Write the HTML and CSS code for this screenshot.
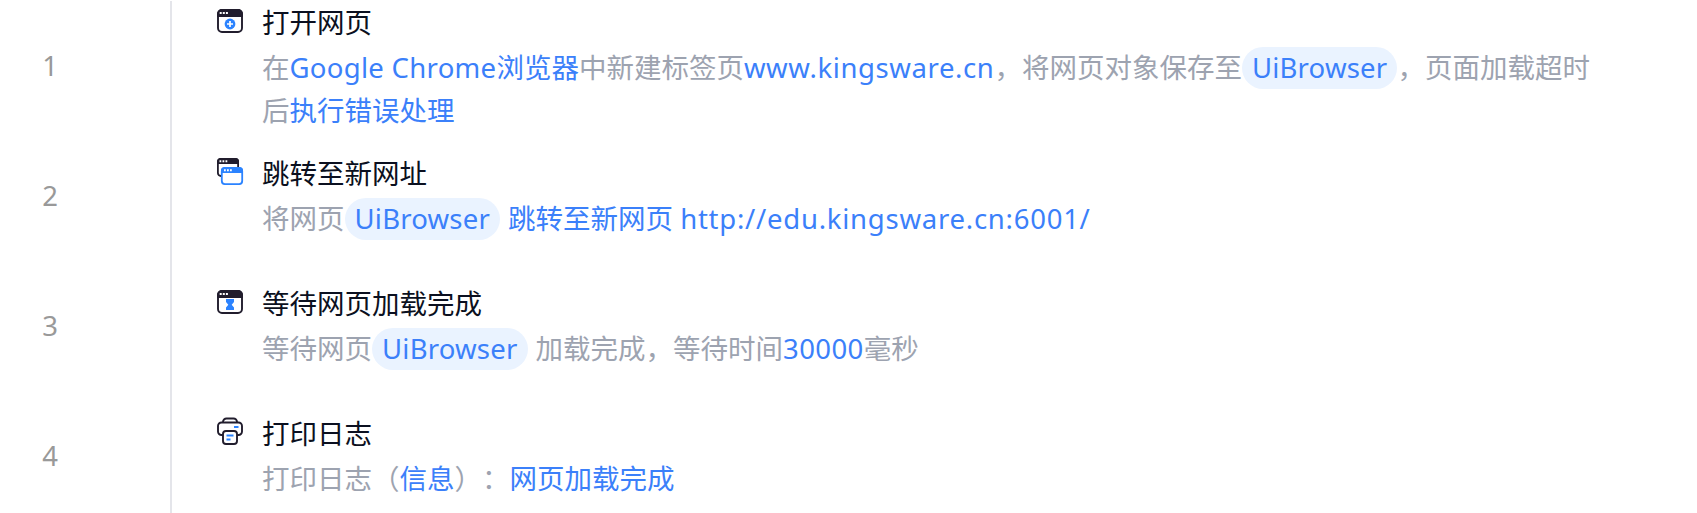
FILE: index.html
```html
<!DOCTYPE html>
<html lang="zh-CN">
<head>
<meta charset="utf-8">
<title>流程步骤</title>
<link rel="stylesheet" href="styles.css">
</head>
<body>
<main class="flow">
  <ol class="numbers">
    <li class="number">1</li>
    <li class="number">2</li>
    <li class="number">3</li>
    <li class="number">4</li>
  </ol>
  <div class="steps">
    <section class="step">
      <svg class="icon" viewBox="0 0 28 28" fill="none">
        <rect x="2" y="3" width="24" height="22" rx="4" stroke="#211d2d" stroke-width="1.9"/>
        <path d="M1 10V7a5 5 0 0 1 5-5h16a5 5 0 0 1 5 5v3z" fill="#211d2d"/>
        <path d="M3.7 5h2v2h-2zM6.8 5h2v2h-2zM9.9 5h2v2h-2z" fill="#fff"/>
        <circle cx="14" cy="17" r="5.4" fill="#2b83ff"/>
        <path d="M14 14v6M11 17h6" stroke="#fff" stroke-width="1.7"/>
      </svg>
      <div class="content">
        <h2 class="title">打开网页</h2>
        <p class="desc">在<span class="value name">Google Chrome</span><span class="value">浏览器</span>中新建标签页<span class="value url">www.kingsware.cn</span>，将网页对象保存至<span class="pill">UiBrowser</span>，页面加载超时后<span class="value">执行错误处理</span></p>
      </div>
    </section>
    <section class="step">
      <svg class="icon icon-windows" viewBox="0 0 28 28" fill="none">
        <rect x="1.9" y="2" width="20.2" height="17" rx="3" stroke="#211d2d" stroke-width="1.8"/>
        <path d="M1 7V4.5A3.5 3.5 0 0 1 4.5 1h15A3.5 3.5 0 0 1 23 4.5V7z" fill="#211d2d"/>
        <path d="M3.5 3.2h1.8v2H3.5zM6.5 3.2h1.8v2H6.5zM9.5 3.2h1.8v2H9.5z" fill="#fff"/>
        <rect x="5.8" y="11.1" width="20.4" height="16" rx="3" fill="#fff" stroke="#2b83ff" stroke-width="1.8"/>
        <path d="M5 16v-2.500a3.500 3.500 0 0 1 3.500-3.500h15a3.500 3.500 0 0 1 3.500 3.500V16z" fill="#2b83ff"/>
        <path d="M8 12.200h1.800v2H8zM11 12.200h1.800v2H11zM14 12.200h1.800v2H14z" fill="#fff"/>
      </svg>
      <div class="content">
        <h2 class="title">跳转至新网址</h2>
        <p class="desc">将网页<span class="pill">UiBrowser</span><span class="value after">跳转至新网页</span> <span class="value link">http://edu.kingsware.cn:6001/</span></p>
      </div>
    </section>
    <section class="step">
      <svg class="icon" viewBox="0 0 28 28" fill="none">
        <rect x="2" y="3" width="24" height="22" rx="4" stroke="#211d2d" stroke-width="1.9"/>
        <path d="M1 10V7a5 5 0 0 1 5-5h16a5 5 0 0 1 5 5v3z" fill="#211d2d"/>
        <path d="M3.7 5h2v2h-2zM6.8 5h2v2h-2zM9.9 5h2v2h-2z" fill="#fff"/>
        <path d="M10 11h8v3l-2.300 2.800L18 19.500V22h-8v-2.500l2.300-2.700L10 14z" fill="#2b83ff"/>
      </svg>
      <div class="content">
        <h2 class="title">等待网页加载完成</h2>
        <p class="desc">等待网页<span class="pill">UiBrowser</span><span class="after">加载完成，等待时间</span><span class="value amount">30000</span>毫秒</p>
      </div>
    </section>
    <section class="step">
      <svg class="icon icon-printer" viewBox="0 0 28 28" fill="none" stroke="#211d2d" stroke-width="1.9">
        <path d="M7 5.500V5a3.500 3.500 0 0 1 3.500-3.500h7A3.500 3.500 0 0 1 21 5v.5"/>
        <path d="M7 18H5.500A3.500 3.500 0 0 1 2 14.500V9a3.500 3.500 0 0 1 3.500-3.500h17A3.500 3.500 0 0 1 26 9v5.500a3.500 3.500 0 0 1-3.500 3.500H21"/>
        <rect x="7" y="14" width="14" height="13" rx="3" fill="#fff"/>
        <path d="M18 10h4.500M10.500 18.500h7M10.500 22.500h4" stroke="#2b83ff"/>
      </svg>
      <div class="content">
        <h2 class="title">打印日志</h2>
        <p class="desc">打印日志（<span class="value">信息</span>）：<span class="value">网页加载完成</span></p>
      </div>
    </section>
  </div>
</main>
</body>
</html>
```
FILE: styles.css
```css
* { box-sizing: border-box; }
body {
  margin: 0;
  background: #fff;
  font-family: "Noto Sans", "Noto Sans CJK SC", sans-serif;
  font-size: 27.5px;
  text-spacing-trim: space-all;
  height: 513px;
  overflow: hidden;
}
.flow { display: flex; padding-top: 1px; height: 513px; }
.numbers {
  width: 170px;
  flex: none;
  margin: 0;
  padding: 0;
  list-style: none;
}
.number {
  width: 100px;
  height: 130px;
  line-height: 130px;
  text-align: center;
  color: #999;
}
.steps {
  flex: 1;
  height: 530px;
  border-left: 2px solid #e4e5ea;
}
.step {
  display: flex;
  align-items: flex-start;
  height: 130px;
  padding: 21px 0 0 44px;
}
.step:first-child { padding-top: 0; }
.icon { width: 28px; height: 28px; flex: none; margin-top: 6px; }
.icon-windows, .icon-printer { margin-top: 5px; }
.content { width: 1340px; margin-left: 18px; }
.title {
  margin: 0;
  font-size: inherit;
  font-weight: 400;
  line-height: 43px;
  color: #0b1020;
}
.desc {
  margin: 3px 0 0;
  line-height: 42.5px;
  color: #9da3b0;
}
.value { color: #3b80fa; }
.name { letter-spacing: 0.3px; }
.url { letter-spacing: 0.6px; }
.link { letter-spacing: 0.75px; }
.amount { letter-spacing: 0.4px; }
.pill {
  display: inline-block;
  width: 155.5px;
  height: 42px;
  border-radius: 21px;
  background: #eaf3ff;
  color: #3b80fa;
  letter-spacing: 0.2px;
  text-align: center;
  vertical-align: top;
}
.after { margin-left: 8px; }
```
